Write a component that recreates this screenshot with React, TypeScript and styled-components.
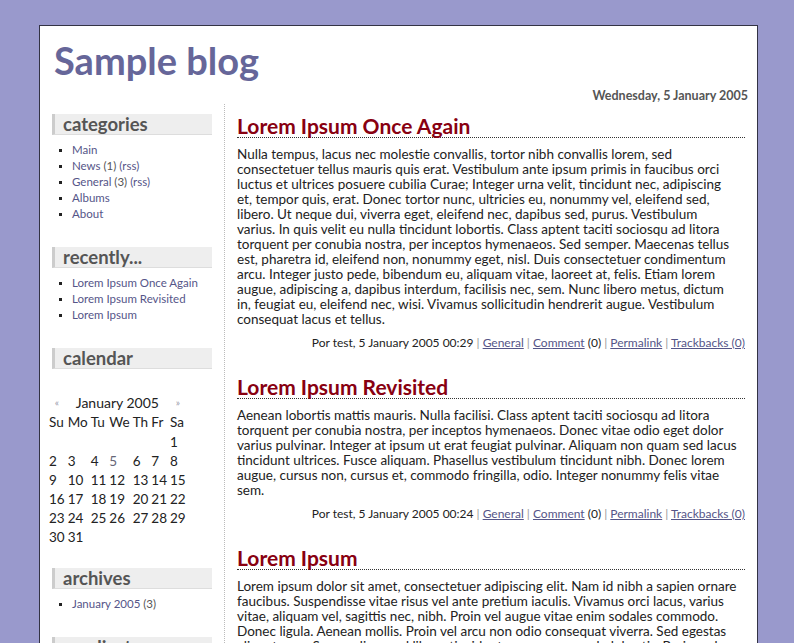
import React from "react";
import styled, { createGlobalStyle } from "styled-components";

const GlobalStyle = createGlobalStyle`
  html, body {
    margin: 0;
    padding: 0;
    background: #9999cc;
    overflow: hidden;
  }
  body {
    font-family: "Lato", "DejaVu Sans", sans-serif;
    color: #222;
  }
`;

type Post = {
  title: string;
  lines: string[];
  time: string;
};

const posts: Post[] = [
  {
    title: "Lorem Ipsum Once Again",
    time: "00:29",
    lines: [
      "Nulla tempus, lacus nec molestie convallis, tortor nibh convallis lorem, sed",
      "consectetuer tellus mauris quis erat. Vestibulum ante ipsum primis in faucibus orci",
      "luctus et ultrices posuere cubilia Curae; Integer urna velit, tincidunt nec, adipiscing",
      "et, tempor quis, erat. Donec tortor nunc, ultricies eu, nonummy vel, eleifend sed,",
      "libero. Ut neque dui, viverra eget, eleifend nec, dapibus sed, purus. Vestibulum",
      "varius. In quis velit eu nulla tincidunt lobortis. Class aptent taciti sociosqu ad litora",
      "torquent per conubia nostra, per inceptos hymenaeos. Sed semper. Maecenas tellus",
      "est, pharetra id, eleifend non, nonummy eget, nisl. Duis consectetuer condimentum",
      "arcu. Integer justo pede, bibendum eu, aliquam vitae, laoreet at, felis. Etiam lorem",
      "augue, adipiscing a, dapibus interdum, facilisis nec, sem. Nunc libero metus, dictum",
      "in, feugiat eu, eleifend nec, wisi. Vivamus sollicitudin hendrerit augue. Vestibulum",
      "consequat lacus et tellus.",
    ],
  },
  {
    title: "Lorem Ipsum Revisited",
    time: "00:24",
    lines: [
      "Aenean lobortis mattis mauris. Nulla facilisi. Class aptent taciti sociosqu ad litora",
      "torquent per conubia nostra, per inceptos hymenaeos. Donec vitae odio eget dolor",
      "varius pulvinar. Integer at ipsum ut erat feugiat pulvinar. Aliquam non quam sed lacus",
      "tincidunt ultrices. Fusce aliquam. Phasellus vestibulum tincidunt nibh. Donec lorem",
      "augue, cursus non, cursus et, commodo fringilla, odio. Integer nonummy felis vitae",
      "sem.",
    ],
  },
  {
    title: "Lorem Ipsum",
    time: "00:19",
    lines: [
      "Lorem ipsum dolor sit amet, consectetuer adipiscing elit. Nam id nibh a sapien ornare",
      "faucibus. Suspendisse vitae risus vel ante pretium iaculis. Vivamus orci lacus, varius",
      "vitae, aliquam vel, sagittis nec, nibh. Proin vel augue vitae enim sodales commodo.",
      "Donec ligula. Aenean mollis. Proin vel arcu non odio consequat viverra. Sed egestas",
      "aliquet arcu. Suspendisse sed libero tincidunt magna commodo lobortis. Proin sed nunc",
    ],
  },
];

const weeks: (number | null)[][] = [
  [null, null, null, null, null, null, 1],
  [2, 3, 4, 5, 6, 7, 8],
  [9, 10, 11, 12, 13, 14, 15],
  [16, 17, 18, 19, 20, 21, 22],
  [23, 24, 25, 26, 27, 28, 29],
  [30, 31, null, null, null, null, null],
];

const App = () => {
  return (
    <>
      <GlobalStyle />
      <Page>
        <Title>Sample blog</Title>
        <DateLine>Wednesday, 5 January 2005</DateLine>

        <Columns>
          <Sidebar>
            <Box>
              <BoxTitle>categories</BoxTitle>
              <List>
                <li><a>Main</a></li>
                <li><a>News</a> (1) <a>(rss)</a></li>
                <li><a>General</a> (3) <a>(rss)</a></li>
                <li><a>Albums</a></li>
                <li><a>About</a></li>
              </List>
            </Box>

            <Box>
              <BoxTitle>recently...</BoxTitle>
              <List>
                <li><a>Lorem Ipsum Once Again</a></li>
                <li><a>Lorem Ipsum Revisited</a></li>
                <li><a>Lorem Ipsum</a></li>
              </List>
            </Box>

            <Box>
              <BoxTitle>calendar</BoxTitle>
              <Calendar>
                <thead>
                  <tr>
                    <Arrow>«</Arrow>
                    <Month colSpan={5}>January 2005</Month>
                    <Arrow>»</Arrow>
                  </tr>
                  <tr>
                    {["Su", "Mo", "Tu", "We", "Th", "Fr", "Sa"].map((d) => (
                      <DayName key={d}>{d}</DayName>
                    ))}
                  </tr>
                </thead>
                <tbody>
                  {weeks.map((w, i) => (
                    <tr key={i}>
                      {w.map((d, j) => (
                        <Day key={j} $linked={d === 5}>
                          {d ?? ""}
                        </Day>
                      ))}
                    </tr>
                  ))}
                </tbody>
              </Calendar>
            </Box>

            <Box>
              <BoxTitle>archives</BoxTitle>
              <List>
                <li><a>January 2005</a> (3)</li>
              </List>
            </Box>

            <Box>
              <BoxTitle>syndicate</BoxTitle>
            </Box>
          </Sidebar>

          <Main>
            {posts.map((p) => (
              <Entry key={p.title}>
                <EntryTitle>{p.title}</EntryTitle>
                <Body>
                  {p.lines.map((l, i) => (
                    <Line key={i}>{l}</Line>
                  ))}
                </Body>
                <Footer>
                  Por test, 5 January 2005 {p.time} <Sep>|</Sep> <a>General</a>{" "}
                  <Sep>|</Sep> <a>Comment</a> (0) <Sep>|</Sep> <a>Permalink</a>{" "}
                  <Sep>|</Sep> <a>Trackbacks (0)</a>
                </Footer>
              </Entry>
            ))}
          </Main>
        </Columns>
      </Page>
    </>
  );
};

export default App;

const Page = styled.div`
  margin: 25px 0 0 39px;
  width: 719px;
  min-height: 700px;
  background: #fff;
  border: 1px solid #333344;
  border-bottom: none;
  box-sizing: border-box;
  padding: 12px 12px 0 12px;
`;

const Title = styled.h1`
  margin: 0 0 0 2px;
  font-family: "Lato", "DejaVu Sans", sans-serif;
  font-size: 38px;
  font-weight: bold;
  color: #666699;
  line-height: 44px;
`;

const DateLine = styled.div`
  text-align: right;
  font-size: 12.5px;
  font-weight: bold;
  color: #555;
  margin: 6px -3px 0 0;
  line-height: 16px;
`;

const Columns = styled.div`
  display: flex;
`;

const Sidebar = styled.div`
  width: 160px;
  flex-shrink: 0;
  padding-top: 10px;
  padding-right: 12px;
  border-right: 1px dotted #bbb;
`;

const Box = styled.div`
  margin-bottom: 25px;
`;

const BoxTitle = styled.div`
  height: 20px;
  background: #eeeeee;
  border-left: 3px solid #cccccc;
  border-bottom: 1px solid #dddddd;
  padding-left: 8px;
  font-size: 18.5px;
  font-weight: bold;
  color: #555;
  line-height: 20px;
`;

const List = styled.ul`
  margin: 7px 0 0 0;
  padding: 0 0 0 20px;
  list-style: square;
  font-size: 11.5px;
  line-height: 16px;
  color: #555;

  li::marker {
    color: #222;
    font-size: 9px;
  }

  a {
    color: #555588;
    text-decoration: none;
  }
`;

const Calendar = styled.table`
  margin: 23px 0 -3px -5px;
  border-collapse: separate;
  border-spacing: 1px 0;
  font-size: 13.5px;
  color: #222;
`;

const Arrow = styled.th`
  color: #9999aa;
  font-size: 10px;
  font-weight: normal;
  text-align: center;
  height: 18px;
`;

const Month = styled.th`
  font-weight: normal;
  text-align: center;
  color: #222;
  font-size: 14px;
`;

const DayName = styled.th`
  font-weight: normal;
  text-align: left;
  padding: 0 1px;
  height: 20px;
`;

const Day = styled.td<{ $linked: boolean }>`
  text-align: left;
  padding: 0 1px;
  height: 19px;
  color: ${(p) => (p.$linked ? "#666677" : "#222")};
`;

const Main = styled.div`
  flex: 1;
  padding: 11px 0 0 12px;
  min-width: 0;
`;

const Entry = styled.div`
  margin-bottom: 26px;
`;

const EntryTitle = styled.h2`
  margin: 0;
  font-size: 21px;
  font-weight: bold;
  color: #880011;
  line-height: 22px;
  border-bottom: 1px dotted #333;
`;

const Body = styled.p`
  margin: 9px 0 0 0;
  font-size: 13.5px;
  line-height: 15px;
  color: #222;
`;

const Line = styled.span`
  display: block;
  white-space: nowrap;
`;

const Footer = styled.div`
  margin-top: 9px;
  text-align: right;
  font-size: 12px;
  line-height: 14px;
  color: #222;

  a {
    color: #555588;
    text-decoration: underline;
  }
`;

const Sep = styled.span`
  color: #999;
`;
